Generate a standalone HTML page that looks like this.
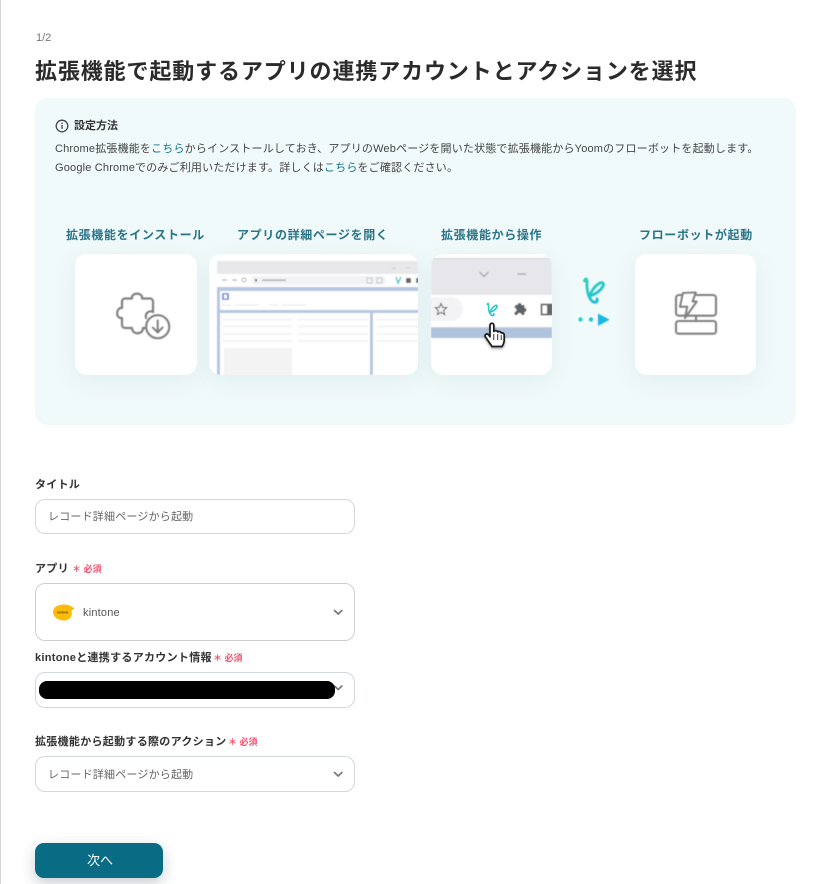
<!DOCTYPE html>
<html lang="ja">
<head>
<meta charset="utf-8">
<title>拡張機能で起動するアプリの連携アカウントとアクションを選択</title>
<style>
html,body{margin:0;padding:0;background:#fff}
body{width:824px;height:884px;position:relative;overflow:hidden;font-family:"Liberation Sans","Noto Sans CJK JP",sans-serif;color:#333}
.t{position:absolute;white-space:nowrap;line-height:1}
.line{position:absolute;left:0;top:0;width:1px;height:884px;background:#d4d4d4}
.panel{position:absolute;left:35px;top:98px;width:761px;height:327px;border-radius:12px;background:#f1fafa}
.card{position:absolute;top:254px;height:121px;background:#fff;border-radius:12px;box-shadow:0 6px 24px rgba(30,90,120,.08)}
.box{position:absolute;left:35px;width:320px;box-sizing:border-box;border:1px solid #d3d7de;border-radius:10px;background:#fff}
.cap{font-size:12px;font-weight:700;letter-spacing:.65px;color:#2a7488;filter:blur(.25px)}
.lab{font-size:11px;font-weight:700;color:#333;letter-spacing:.3px}
.req{font-size:9px;font-weight:700;color:#f2506e}
.ph{font-size:11px;color:#666;letter-spacing:.2px}
.btn{position:absolute;left:36px;top:843px;width:128px;height:35px;background:transparent;color:#fff;font-size:13px;text-align:center;line-height:35px}
.btnbg{position:absolute;left:35px;top:843px;width:128px;height:35px;background:#0a6b85;border-radius:9px;box-shadow:0 5px 14px rgba(30,50,70,.25)}
svg{position:absolute;left:0;top:0}
</style>
</head>
<body>
<div class="line"></div>
<div class="t" style="left:36px;top:33px;font-size:11px;color:#777">1/2</div>
<div class="t" style="left:35px;top:61px;font-size:22px;font-weight:700;letter-spacing:.88px;color:#2b2b2b">拡張機能で起動するアプリの連携アカウントとアクションを選択</div>

<div class="panel"></div>
<div class="t" style="left:74px;top:121px;font-size:11px;font-weight:700;color:#333">設定方法</div>
<div class="t" style="left:55px;top:144px;font-size:11px;letter-spacing:.18px;color:#444">Chrome拡張機能を<span style="color:#0f6f8c">こちら</span>からインストールしておき、アプリのWebページを開いた状態で拡張機能からYoomのフローボットを起動します。</div>
<div class="t" style="left:55px;top:163px;font-size:11px;letter-spacing:.18px;color:#444">Google Chromeでのみご利用いただけます。詳しくは<span style="color:#0f6f8c">こちら</span>をご確認ください。</div>

<div class="t cap" style="left:66px;top:229px">拡張機能をインストール</div>
<div class="t cap" style="left:237px;top:229px">アプリの詳細ページを開く</div>
<div class="t cap" style="left:441px;top:229px">拡張機能から操作</div>
<div class="t cap" style="left:639px;top:229px">フローボットが起動</div>

<div class="card" style="left:75px;width:122px"></div>
<div class="card" style="left:209px;width:209px"></div>
<div class="card" style="left:431px;width:121px"></div>
<div class="card" style="left:635px;width:121px"></div>

<svg width="824" height="884" viewBox="0 0 824 884" fill="none">
<defs>
<clipPath id="c2"><rect x="209" y="254" width="209" height="121" rx="12"/></clipPath>
<clipPath id="c3"><rect x="431" y="254" width="121" height="121" rx="12"/></clipPath>
<linearGradient id="g" x1="0" y1="0" x2="1" y2="1"><stop offset="0" stop-color="#2ed3b7"/><stop offset="1" stop-color="#1cb8dc"/></linearGradient>
<filter id="b"><feGaussianBlur stdDeviation=".45"/></filter>
<filter id="s" x="-30%" y="-30%" width="160%" height="170%"><feDropShadow dx="0" dy="1.500" stdDeviation="1.200" flood-color="#000" flood-opacity=".35"/></filter>
</defs>

<!-- info icon -->
<circle cx="62" cy="126" r="5.800" stroke="#444" stroke-width="1.300"/>
<rect x="61.400" y="125" width="1.300" height="4" fill="#444"/>
<rect x="61.400" y="122.600" width="1.300" height="1.400" fill="#444"/>

<!-- puzzle install icon -->
<g filter="url(#b)" stroke="#808080" stroke-width="2.200" stroke-linejoin="round" stroke-linecap="round">
<path d="M146 318C145 313 149 310 153 312V301.500A3 3 0 0 0 150 298.500H142C143 292 131 292 132 298.500H125A3 3 0 0 0 122 301.500V308C116 307 115 319 122 318V325A3 3 0 0 0 125 328H132C132 335 143 335 143 328H147"/>
<circle cx="157.700" cy="326.700" r="11.500" fill="#fff"/>
<path d="M157.700 320.500V332M152.800 327.500L157.700 332.500L162.600 327.500"/>
</g>

<!-- browser page illustration -->
<g clip-path="url(#c2)" filter="url(#b)">
<rect x="217" y="261" width="205" height="13" fill="#e8e8eb"/>
<rect x="217" y="274" width="205" height="13" fill="#fff"/>
<rect x="251" y="276" width="135" height="9" rx="4.500" fill="#f2f3f5"/>
<path d="M222 280H227M232 280H237" stroke="#999" stroke-width="1"/>
<circle cx="244" cy="280" r="2" stroke="#999" stroke-width=".8"/>
<rect x="255" y="279" width="2" height="2.500" fill="#666"/>
<rect x="262" y="279.500" width="24" height="1.400" fill="#aaa"/>
<rect x="367" y="278" width="5" height="5" stroke="#bbb" stroke-width=".8"/>
<rect x="377" y="278" width="5" height="5" stroke="#bbb" stroke-width=".8"/>
<path d="M396 277L398 283L401 277" stroke="#37c6d0" stroke-width="1.400"/>
<rect x="406" y="278" width="5" height="5" fill="#666"/>
<rect x="416" y="278" width="3" height="5" fill="#777"/>
<path d="M392 267L394 269L396 267M406 267.600H410" stroke="#c4c4c8" stroke-width=".8"/>
<rect x="217" y="287" width="205" height="88" fill="#b5c8e2"/>
<rect x="220" y="291" width="200" height="19" rx="1" fill="#fff"/>
<rect x="222" y="293" width="7" height="7" rx="1" fill="#7f8fe8"/>
<rect x="224" y="294.500" width="3" height="4" fill="#fff"/>
<rect x="222" y="304" width="9" height="1.800" fill="#f0f0f0"/>
<rect x="235" y="304" width="24" height="1.800" fill="#f0f0f0"/>
<rect x="269" y="304" width="9" height="1.800" fill="#f0f0f0"/>
<rect x="282" y="304" width="24" height="1.800" fill="#f0f0f0"/>
<rect x="220" y="313" width="150" height="62" fill="#fff"/>
<rect x="373" y="313" width="48" height="62" fill="#fff"/>
<g fill="#f3f3f3">
<rect x="222" y="318.500" width="70" height="2"/><rect x="222" y="325.500" width="70" height="2"/><rect x="222" y="333" width="70" height="2"/><rect x="222" y="340" width="70" height="2"/>
<rect x="298" y="318.500" width="70" height="2"/><rect x="298" y="325.500" width="70" height="2"/><rect x="298" y="333" width="70" height="2"/><rect x="298" y="340" width="70" height="2"/>
<rect x="377" y="318.500" width="45" height="2"/><rect x="377" y="325.500" width="45" height="2"/><rect x="377" y="333" width="45" height="2"/><rect x="377" y="340" width="45" height="2"/>
<rect x="224" y="348" width="68" height="30"/>
</g>
</g>

<!-- extension illustration -->
<g clip-path="url(#c3)" filter="url(#b)">
<rect x="431" y="258" width="121" height="1.400" fill="#d4d4d6"/>
<rect x="431" y="259" width="121" height="36" fill="#e7e7eb"/>
<rect x="431" y="295" width="121" height="32" fill="#fff"/>
<rect x="420" y="297.500" width="43" height="23.500" rx="11.700" fill="#f3f3f6"/>
<path d="M441 303.500L442.700 307.300L446.700 307.700L443.700 310.400L444.600 314.500L441 312.400L437.400 314.500L438.300 310.400L435.300 307.700L439.300 307.300Z" stroke="#666" stroke-width="1.100"/>
<path d="M479.500 272L484 276.500L488.500 272" stroke="#9a9aa0" stroke-width="1.200"/>
<path d="M517.500 274H526" stroke="#9a9aa0" stroke-width="1.200"/>
<path d="M515 305h2.500a2 2 0 0 1 4 0h3v3a2 2 0 0 1 0 4v3h-3a2 2 0 0 0-4 0h-3v-3a2 2 0 0 0 0-4z" fill="#5f6368"/>
<rect x="541.500" y="304.500" width="10" height="10" stroke="#666" stroke-width="1.800"/>
<rect x="547" y="305" width="5" height="9" fill="#666"/>
<rect x="431" y="327" width="121" height="1.200" fill="#d0d0d2"/>
<rect x="431" y="328" width="121" height="10" fill="#b0c3de"/>
</g>
<!-- small logo -->
<g transform="translate(183.300,158.400) scale(.52)" filter="url(#b)" stroke="url(#g)" stroke-width="3" stroke-linecap="round" fill="none">
<path d="M584.500 281C585.500 278 587 278 587 282C586.500 289 588 297 592 301C595 303.500 598 302 597 299"/>
<path d="M589.500 296C592 290 596 285 600 283C603 281.500 604.500 284 602.500 287C600 291 595 294.500 589.500 296"/>
</g>
<!-- hand cursor -->
<g filter="url(#s)">
<path d="M491 345L485.500 337C484 334.500 487 333 488.500 334.800L490 336.800V325.500C490 322.500 493.800 322.500 493.800 325.500V331.500C495 330.200 497.200 330.500 497.700 332C499 331 500.800 331.500 501.300 333C502.800 332.500 504.200 333.500 504.200 335.500V340C504.200 343 503 345 502 346.500H492Z" fill="#fff" stroke="#1b1b1b" stroke-width="1.700" stroke-linejoin="round"/>
<path d="M493.800 334V340M497.700 334V340M501.200 335V340" stroke="#1b1b1b" stroke-width=".9"/>
</g>

<!-- arrow with logo -->
<g filter="url(#b)">
<g stroke="url(#g)" stroke-width="2.800" stroke-linecap="round" fill="none">
<path d="M584.500 281C585.500 278 587 278 587 282C586.500 289 588 297 592 301C595 303.500 598 302 597 299"/>
<path d="M589.500 296C592 290 596 285 600 283C603 281.500 604.500 284 602.500 287C600 291 595 294.500 589.500 296"/>
</g>
<circle cx="580.500" cy="319.500" r="2.200" fill="#2fd0c0"/>
<circle cx="591" cy="319.500" r="2.200" fill="#25c6d0"/>
<path d="M598.300 314V325.500L609 319.700Z" fill="#1cb8e4" stroke="#1cb8e4" stroke-width=".6" stroke-linejoin="round"/>
</g>

<!-- flowbot icon -->
<g filter="url(#b)" stroke="#808080" stroke-width="2.100" stroke-linejoin="round">
<rect x="676" y="295" width="40" height="20.700" rx="3"/>
<path d="M696 316V321"/>
<rect x="676" y="321" width="40" height="12.700" rx="2.500"/>
<path d="M683 293L695.700 292.500L692.500 301.500L696.700 301.500L685 318L687.300 306.700L680 306.700Z" fill="#fff"/>
</g>
</svg>

<div class="t lab" style="left:35px;top:480px">タイトル</div>
<div class="box" style="top:499px;height:35px"></div>
<div class="t ph" style="left:48px;top:512px">レコード詳細ページから起動</div>

<div class="t lab" style="left:35px;top:564px">アプリ</div>
<div class="t req" style="left:72px;top:565px">＊ 必須</div>
<div class="box" style="top:583px;height:58px;border-color:#cfcfcf"></div>
<svg width="824" height="884" viewBox="0 0 824 884">
<path d="M53 612C53 607 58 604.500 64 604.500C69 604.500 71 606 74.500 608.500L71.500 610.500C72.500 614 71.500 620.500 64 620.500C58 620.500 53 617 53 612Z" fill="#fdbb0a"/>
<text x="57" y="613.500" font-size="3.200" font-weight="700" font-family="Liberation Sans" fill="#5a4a00">kintone</text>
<path d="M334.500 610.500L338.200 614L341.900 610.500" stroke="#777" stroke-width="1.700" fill="none" stroke-linecap="round" stroke-linejoin="round"/>
</svg>
<div class="t" style="left:83px;top:608px;font-size:11px;color:#555;letter-spacing:.2px">kintone</div>

<div class="t lab" style="left:35px;top:653px">kintoneと連携するアカウント情報</div>
<div class="t req" style="left:213px;top:654px">＊ 必須</div>
<div class="box" style="top:672px;height:36px"></div>
<svg width="824" height="884" viewBox="0 0 824 884">
<path d="M334.500 686L338.200 689.500L341.900 686" stroke="#777" stroke-width="1.700" fill="none" stroke-linecap="round" stroke-linejoin="round"/>
<rect x="39" y="681" width="296" height="18" rx="8" fill="#000"/>
</svg>

<div class="t lab" style="left:35px;top:737px">拡張機能から起動する際のアクション</div>
<div class="t req" style="left:228px;top:738px">＊ 必須</div>
<div class="box" style="top:756px;height:36px"></div>
<div class="t ph" style="left:48px;top:770px">レコード詳細ページから起動</div>
<svg width="824" height="884" viewBox="0 0 824 884">
<path d="M334.500 772.500L338.200 776L341.900 772.500" stroke="#777" stroke-width="1.700" fill="none" stroke-linecap="round" stroke-linejoin="round"/>
</svg>

<div class="btnbg"></div>
<div class="btn">次へ</div>
</body>
</html>
